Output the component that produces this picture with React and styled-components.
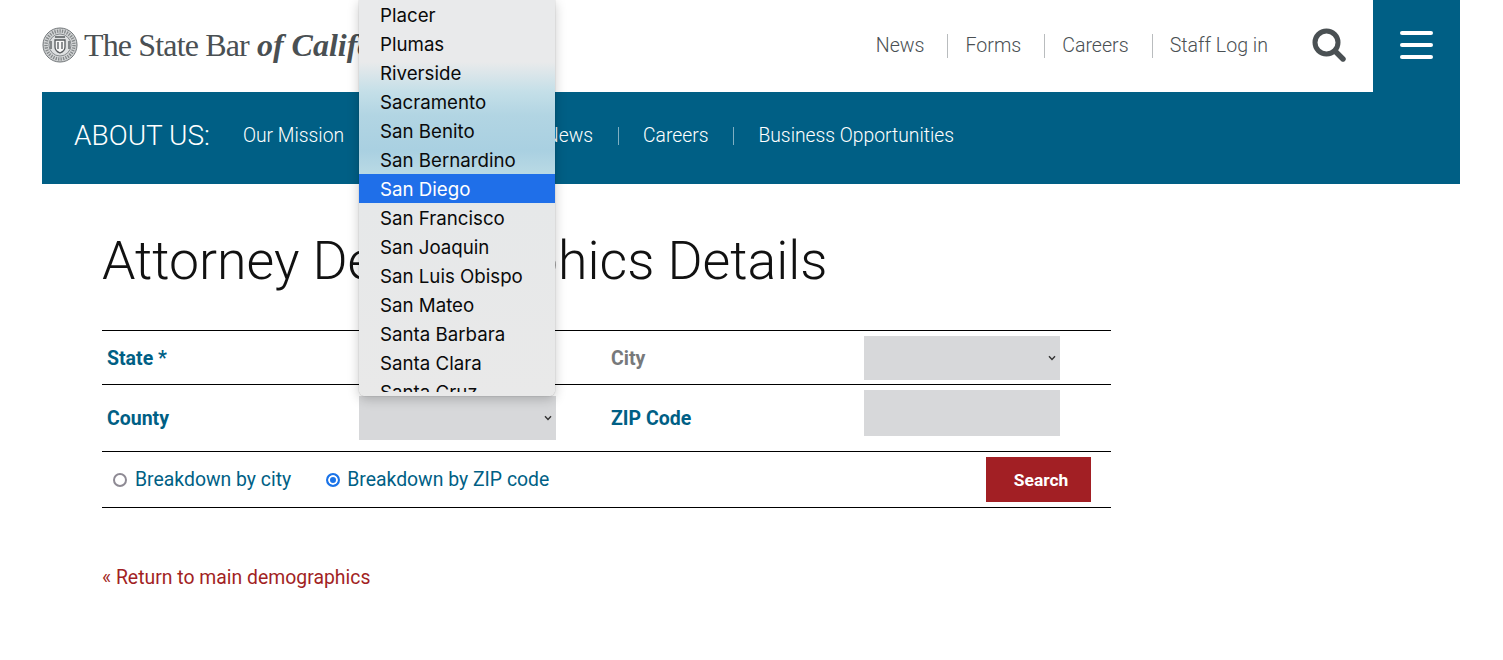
import React from "react";
import styled, { createGlobalStyle } from "styled-components";

const GlobalStyle = createGlobalStyle`
  html, body {
    margin: 0;
    padding: 0;
    background: #fff;
    font-family: Roboto, "Liberation Sans", sans-serif;
  }
`;

const Page = styled.div`
  position: relative;
  height: 660px;
  padding: 0 43px 0 42px;
  overflow: hidden;
`;

const TopBar = styled.header`
  display: flex;
  align-items: center;
  height: 92px;
`;

const Logo = styled.a`
  display: flex;
  align-items: center;
  gap: 6px;
  margin-bottom: 2px;
  color: #4a5053;
  font-family: "Liberation Serif", serif;
  font-size: 32px;
  letter-spacing: -0.85px;
  white-space: nowrap;
  em {
    font-weight: bold;
    letter-spacing: 0;
    margin-left: 8px;
  }
`;

const TopNav = styled.nav`
  display: flex;
  align-items: center;
  margin-left: auto;
`;

const TopLink = styled.a`
  color: #4a5053;
  font-size: 19.6px;
  font-weight: 300;
  line-height: 24px;
  padding: 0 23px 0 17px;
  border-right: 1px solid #b9bcbe;
  &:last-child {
    border-right: none;
    padding-right: 0;
  }
`;

const SearchButton = styled.button`
  display: flex;
  border: none;
  background: none;
  padding: 0;
  margin: 0 27px 2px 44px;
`;

const MenuButton = styled.button`
  display: flex;
  flex-direction: column;
  justify-content: center;
  align-items: center;
  gap: 8px;
  box-sizing: border-box;
  width: 87px;
  height: 92px;
  border: none;
  padding: 0 0 2px;
  background: #005f85;
  span {
    display: block;
    width: 33px;
    height: 4px;
    border-radius: 2px;
    background: #fff;
  }
`;

const SubBar = styled.nav`
  display: flex;
  align-items: center;
  box-sizing: border-box;
  height: 92px;
  padding: 0 0 5px 32px;
  background: #005f85;
  color: #fff;
`;

const SubTitle = styled.span`
  font-size: 28px;
  font-weight: 300;
  margin: 0 33px 1px 0;
`;

const SubLink = styled.a`
  font-size: 19.3px;
  font-weight: 300;
  line-height: 18px;
  padding: 0 25px 0 0;
  margin-right: 24px;
  border-right: 1px solid #7fafc2;
  &:last-child {
    border-right: none;
  }
`;

const Content = styled.main`
  padding: 46px 0 0 60px;
  width: 1009px;
`;

const Heading = styled.h1`
  margin: 0 0 38px;
  font-size: 53.6px;
  font-weight: 300;
  line-height: 62px;
  color: #111;
`;

const FormRow = styled.div`
  display: grid;
  grid-template-columns: 257px 247px 258px 247px;
  align-items: center;
  height: ${(p) => p.$height}px;
  border-top: 1px solid #000;
  box-sizing: border-box;
`;

const Label = styled.label`
  padding-left: 5px;
  padding-top: ${(p) => (p.$nudge ? "2px" : "0")};
  font-size: 19.5px;
  font-weight: 700;
  color: ${(p) => (p.$muted ? "#77797b" : "#005f85")};
`;

const Select = styled.div`
  display: flex;
  align-items: center;
  justify-content: flex-end;
  box-sizing: border-box;
  width: ${(p) => p.$width}px;
  height: 44px;
  padding-right: 4px;
  background: #d7d8da;
`;

const ZipInput = styled.input`
  display: block;
  align-self: start;
  box-sizing: border-box;
  width: 196px;
  height: 46px;
  margin-top: 5px;
  border: none;
  padding: 0;
  background: #d7d8da;
`;

const RadioRow = styled.div`
  display: flex;
  align-items: center;
  height: 57px;
  padding: 0 20px 0 11px;
  border-top: 1px solid #000;
  border-bottom: 1px solid #000;
  box-sizing: border-box;
`;

const RadioOption = styled.label`
  display: flex;
  align-items: center;
  gap: ${(p) => p.$gap}px;
  margin-right: 35px;
  font-size: 19.4px;
  color: #005f85;
`;

const RadioMark = styled.span`
  display: block;
  box-sizing: border-box;
  width: 14px;
  height: 14px;
  border-radius: 50%;
  border: 2px solid ${(p) => (p.$on ? "#1a73e8" : "#8e8a94")};
  background: ${(p) => (p.$on ? "#1a73e8" : "#fff")};
  box-shadow: ${(p) => (p.$on ? "inset 0 0 0 2px #fff" : "none")};
`;

const SearchSubmit = styled.button`
  width: 105px;
  height: 45px;
  margin-left: auto;
  border: none;
  padding: 0 0 0 5px;
  background: #a21f24;
  color: #fff;
  font-family: Roboto, sans-serif;
  font-size: 17.4px;
  font-weight: 700;
`;

const ReturnLink = styled.a`
  display: block;
  margin-top: 58px;
  font-size: 19.4px;
  color: #a21f24;
`;

const DropPanel = styled.div`
  position: absolute;
  left: 359px;
  top: 0;
  width: 196px;
  height: 396px;
  border-radius: 0 0 6px 6px;
  box-shadow: 0 0 1px rgba(0, 0, 0, 0.45), 0 3px 12px rgba(0, 0, 0, 0.22);
  background: linear-gradient(
    #e9eaeb 0,
    #e9eaeb 62px,
    #c4dfe8 92px,
    #b2d5e3 115px,
    #a9d0e1 150px,
    #bcdbe5 178px,
    #e6e8e9 206px,
    #e9e9e9 100%
  );
`;

const DropList = styled.ul`
  height: 392px;
  margin: 0;
  padding: 0;
  list-style: none;
  overflow: hidden;
`;

const DropItem = styled.li`
  box-sizing: border-box;
  height: 29px;
  padding-left: 21px;
  font-family: Inter, sans-serif;
  font-size: 18.7px;
  line-height: 31px;
  color: ${(p) => (p.$active ? "#fff" : "#0a0a0a")};
  background: ${(p) => (p.$active ? "#1f6fe9" : "transparent")};
`;

const counties = [
  "Placer", "Plumas", "Riverside", "Sacramento", "San Benito", "San Bernardino", "San Diego",
  "San Francisco", "San Joaquin", "San Luis Obispo", "San Mateo", "Santa Barbara", "Santa Clara", "Santa Cruz",
];

const Seal = () => (
  <svg width="36" height="36" viewBox="0 0 36 36" fill="none" stroke="#6f7477">
    <circle cx="18" cy="18" r="17" fill="#d4d6d7" strokeWidth="1" />
    <circle cx="18" cy="18" r="14" strokeWidth="3.4" strokeDasharray="1.3 1.2" stroke="#85898b" />
    <circle cx="18" cy="18" r="11" fill="#dfe1e2" strokeWidth="0.8" />
    <path d="M13 13h10v7c0 3-2.5 5-5 6-2.5-1-5-3-5-6z" fill="#f8f8f8" strokeWidth="1.3" stroke="#55595c" />
    <path d="M16 15v7M20 15v7M9 14v8M27 14v8M13 10h10" strokeWidth="1.3" stroke="#55595c" />
  </svg>
);

const SearchIcon = () => (
  <svg width="34" height="34" viewBox="0 0 34 34" fill="none" stroke="#4a5053">
    <circle cx="14.5" cy="14.5" r="11.5" strokeWidth="5" />
    <path d="M23.5 23.5L31 31" strokeWidth="5.4" strokeLinecap="round" />
  </svg>
);

const Chevron = () => (
  <svg width="8" height="6" viewBox="0 0 8 6" fill="none" stroke="#333">
    <path d="M1 1.2L4 4.4L7 1.2" strokeWidth="1.4" />
  </svg>
);

export default function App() {
  return (
    <Page>
      <GlobalStyle />
      <TopBar>
        <Logo>
          <Seal />
          <span>The State Bar<em><i>of California</i></em></span>
        </Logo>
        <TopNav>
          <TopLink>News</TopLink>
          <TopLink>Forms</TopLink>
          <TopLink>Careers</TopLink>
          <TopLink>Staff Log in</TopLink>
        </TopNav>
        <SearchButton aria-label="Search"><SearchIcon /></SearchButton>
        <MenuButton aria-label="Menu"><span /><span /><span /></MenuButton>
      </TopBar>
      <SubBar>
        <SubTitle>ABOUT US:</SubTitle>
        <SubLink>Our Mission</SubLink>
        <SubLink>Governance</SubLink>
        <SubLink>News</SubLink>
        <SubLink>Careers</SubLink>
        <SubLink>Business Opportunities</SubLink>
      </SubBar>
      <Content>
        <Heading>Attorney Demographics Details</Heading>
        <FormRow $height={54}>
          <Label $nudge>State *</Label>
          <div />
          <Label $nudge $muted>City</Label>
          <Select $width={196}><Chevron /></Select>
        </FormRow>
        <FormRow $height={67}>
          <Label>County</Label>
          <Select $width={197}><Chevron /></Select>
          <Label>ZIP Code</Label>
          <ZipInput />
        </FormRow>
        <RadioRow>
          <RadioOption $gap={8}><RadioMark />Breakdown by city</RadioOption>
          <RadioOption $gap={7}><RadioMark $on />Breakdown by ZIP code</RadioOption>
          <SearchSubmit>Search</SearchSubmit>
        </RadioRow>
        <ReturnLink>« Return to main demographics</ReturnLink>
      </Content>
      <DropPanel>
        <DropList>
          {counties.map((name) => (
            <DropItem key={name} $active={name === "San Diego"}>{name}</DropItem>
          ))}
        </DropList>
      </DropPanel>
    </Page>
  );
}
